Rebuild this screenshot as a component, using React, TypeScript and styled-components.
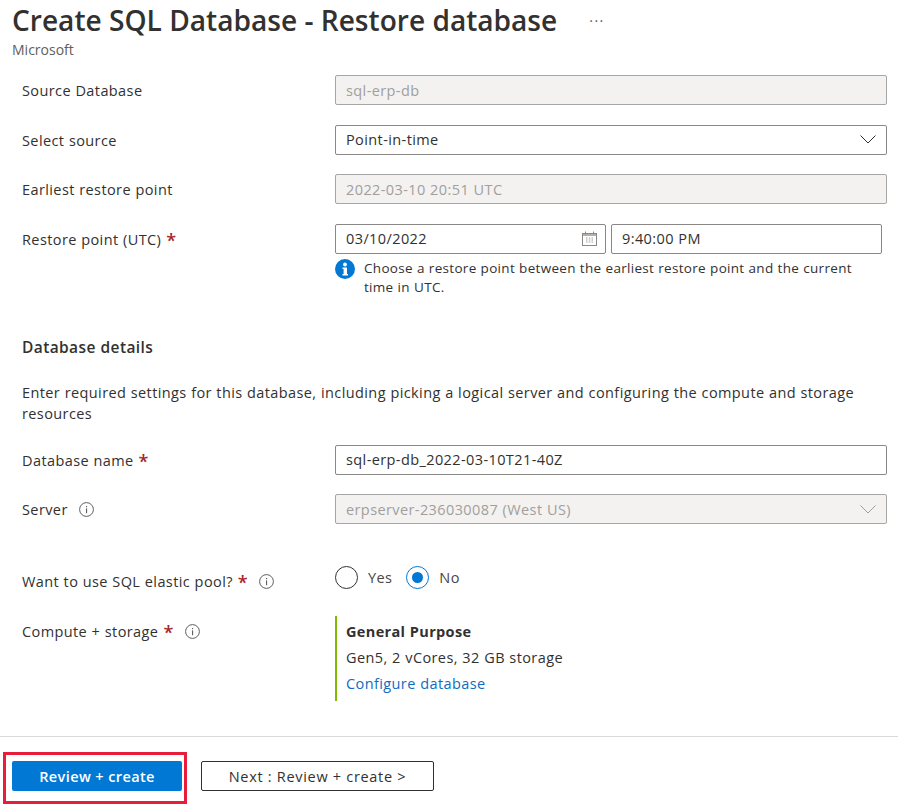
import React from 'react';
import styled, { createGlobalStyle } from 'styled-components';

const FONT = '"Open Sans", "Noto Sans", "Liberation Sans", sans-serif';
const TEXT = '#323130';
const BORDER = '#8a8886';
const DISABLED_BG = '#f3f2f1';
const DISABLED_BORDER = '#a8a6a4';
const DISABLED_TEXT = '#a19f9d';
const BLUE = '#0078d4';
const REQUIRED = '#a4262c';

const GlobalStyle = createGlobalStyle`
  html, body {
    margin: 0;
    padding: 0;
    background: #fff;
    height: 806px;
    overflow: hidden;
  }
  * {
    box-sizing: border-box;
  }
`;

function ChevronIcon({ color }: { color: string }) {
  return (
    <svg width="16" height="9" viewBox="0 0 16 9" fill="none">
      <path d="M0.5 0.5L8 8L15.5 0.5" stroke={color} strokeWidth="1" />
    </svg>
  );
}

function CalendarIcon() {
  return (
    <CalendarSvg width="15" height="15" viewBox="0 0 15 15" fill="none">
      <rect x="0.5" y="2.5" width="14" height="12" fill="#fff" stroke="#8a8886" />
      <rect x="1" y="3" width="13" height="2" fill="#b3b0ad" />
      <path d="M3.5 0.5v3M11.5 0.5v3" stroke="#8a8886" />
      <path
        d="M4 7h1.5M6.8 7h1.5M9.5 7h1.5M4 9h1.5M6.8 9h1.5M9.5 9h1.5M4 11h1.5M6.8 11h1.5M9.5 11h1.5"
        stroke="#a19f9d"
      />
    </CalendarSvg>
  );
}

function SmallInfoIcon() {
  return (
    <svg width="15" height="15" viewBox="0 0 15 15" fill="none">
      <circle cx="7.5" cy="7.5" r="6.9" stroke="#605e5c" strokeWidth="1" />
      <rect x="7" y="6.4" width="1.1" height="4.8" fill="#605e5c" />
      <rect x="7" y="4" width="1.1" height="1.2" fill="#605e5c" />
    </svg>
  );
}

function BlueInfoIcon() {
  return (
    <BlueInfoSvg width="20" height="20" viewBox="0 0 20 20">
      <circle cx="10" cy="10" r="10" fill={BLUE} />
      <path d="M7.5 8.5H12V15H13V16.5H7.5V15H8.6V10H7.5Z" fill="#fff" />
      <circle cx="10" cy="5.5" r="1.9" fill="#fff" />
    </BlueInfoSvg>
  );
}

type FieldProps = {
  label: string;
  required?: boolean;
  info?: boolean;
  children: React.ReactNode;
};

function Field({ label, required, info, children }: FieldProps) {
  return (
    <Row>
      <Label>
        {label}
        {required && <Required>*</Required>}
        {info && (
          <InfoSlot>
            <SmallInfoIcon />
          </InfoSlot>
        )}
      </Label>
      <Control>{children}</Control>
    </Row>
  );
}

export default function App() {
  return (
    <Page>
      <GlobalStyle />
      <Header>
        <TitleRow>
          <Title>Create SQL Database - Restore database</Title>
          <More>···</More>
        </TitleRow>
        <Subtitle>Microsoft</Subtitle>
      </Header>

      <Form>
        <Field label="Source Database">
          <Box disabled>sql-erp-db</Box>
        </Field>
        <Field label="Select source">
          <Box>
            Point-in-time
            <ChevronIcon color="#323130" />
          </Box>
        </Field>
        <Field label="Earliest restore point">
          <Box disabled>2022-03-10 20:51 UTC</Box>
        </Field>
        <Field label="Restore point (UTC)" required>
          <DateRow>
            <Box>
              03/10/2022
              <CalendarIcon />
            </Box>
            <Box>9:40:00 PM</Box>
          </DateRow>
          <InfoBlock>
            <BlueInfoIcon />
            <InfoText>
              Choose a restore point between the earliest restore point and the
              current time in UTC.
            </InfoText>
          </InfoBlock>
        </Field>

        <SectionTitle>Database details</SectionTitle>
        <SectionText>
          Enter required settings for this database, including picking a logical
          server and configuring the compute and storage resources
        </SectionText>

        <Field label="Database name" required>
          <Box>sql-erp-db_2022-03-10T21-40Z</Box>
        </Field>
        <Field label="Server" info>
          <Box disabled>
            erpserver-236030087 (West US)
            <ChevronIcon color="#a19f9d" />
          </Box>
        </Field>

        <PoolRow>
          <Field label="Want to use SQL elastic pool?" required info>
            <RadioGroup>
              <RadioOption>
                <Radio />
                Yes
              </RadioOption>
              <RadioOption>
                <Radio checked />
                No
              </RadioOption>
            </RadioGroup>
          </Field>
        </PoolRow>

        <Field label="Compute + storage" required info>
          <Summary>
            <SummaryTitle>General Purpose</SummaryTitle>
            <SummaryLine>Gen5, 2 vCores, 32 GB storage</SummaryLine>
            <SummaryLink href="#">Configure database</SummaryLink>
          </Summary>
        </Field>
      </Form>

      <Footer>
        <Highlight>
          <PrimaryButton>Review + create</PrimaryButton>
        </Highlight>
        <SecondaryButton>Next : Review + create &gt;</SecondaryButton>
      </Footer>
    </Page>
  );
}

const CalendarSvg = styled.svg`
  margin-right: -2px;
`;

const BlueInfoSvg = styled.svg`
  flex: none;
`;

const Page = styled.div`
  width: 898px;
  height: 806px;
  overflow: hidden;
  font-family: ${FONT};
  font-size: 14.5px;
  letter-spacing: 0.4px;
  word-spacing: 0.3px;
  color: ${TEXT};
  display: flex;
  flex-direction: column;
`;

const Header = styled.header`
  padding-left: 12px;
  height: 75px;
`;

const TitleRow = styled.div`
  display: flex;
  align-items: center;
  height: 40px;
`;

const Title = styled.h1`
  margin: 0;
  font-size: 28.1px;
  font-weight: 600;
  letter-spacing: 0;
  word-spacing: 0;
  line-height: 40px;
  white-space: nowrap;
`;

const More = styled.span`
  margin-left: 32px;
  font-size: 14px;
  color: #605e5c;
  letter-spacing: 1.5px;
`;

const Subtitle = styled.div`
  font-size: 14px;
  letter-spacing: 0;
  line-height: 20px;
  color: #605e5c;
`;

const Form = styled.div`
  flex: 1;
  padding: 0 11px 0 22px;
`;

const Row = styled.div`
  display: grid;
  grid-template-columns: 313px 552px;
  margin-bottom: 19.5px;
`;

const Label = styled.div`
  display: flex;
  align-items: flex-start;
  height: 30px;
  line-height: 32px;
  white-space: nowrap;
`;

const Required = styled.span`
  margin-left: 5px;
  color: ${REQUIRED};
  font-size: 18px;
  font-weight: 600;
`;

const InfoSlot = styled.span`
  display: inline-flex;
  align-items: center;
  height: 31px;
  margin-left: 11px;
`;

const Control = styled.div`
  min-width: 0;
`;

const Box = styled.div<{ disabled?: boolean }>`
  display: flex;
  align-items: center;
  justify-content: space-between;
  flex: 1;
  height: 30px;
  padding: 0 10px;
  border: 1px solid ${(p) => (p.disabled ? DISABLED_BORDER : BORDER)};
  border-radius: 2px;
  background: ${(p) => (p.disabled ? DISABLED_BG : '#fff')};
  color: ${(p) => (p.disabled ? DISABLED_TEXT : TEXT)};
  white-space: nowrap;
`;

const DateRow = styled.div`
  display: flex;
  gap: 5px;
  width: 547px;
`;

const InfoBlock = styled.div`
  display: flex;
  gap: 9px;
  margin-top: 5px;
  margin-bottom: 19px;
`;

const InfoText = styled.div`
  width: 500px;
  line-height: 19px;
  font-size: 13.5px;
  letter-spacing: 0.3px;
`;

const SectionTitle = styled.h2`
  margin: 0 0 23px;
  font-size: 15.5px;
  font-weight: 600;
  letter-spacing: 0.4px;
  line-height: 24px;
`;

const SectionText = styled.p`
  margin: 0 0 20.5px;
  line-height: 21px;
  width: 860px;
`;

const PoolRow = styled.div`
  margin-top: 41.5px;
  height: 50px;
`;

const RadioGroup = styled.div`
  display: flex;
  gap: 14px;
  height: 24px;
`;

const RadioOption = styled.label`
  display: flex;
  align-items: center;
  gap: 10px;
  color: #484644;
`;

const Radio = styled.span<{ checked?: boolean }>`
  position: relative;
  width: 23px;
  height: 23px;
  border-radius: 50%;
  border: 1px solid ${(p) => (p.checked ? BLUE : '#323130')};

  &::after {
    content: '';
    display: ${(p) => (p.checked ? 'block' : 'none')};
    position: absolute;
    inset: 5px;
    border-radius: 50%;
    background: ${BLUE};
  }
`;

const Summary = styled.div`
  height: 85px;
  border-left: 2px solid #7fba00;
  padding: 0 0 2px 9px;
  display: flex;
  flex-direction: column;
  justify-content: center;
  gap: 5px;
  line-height: 21px;
`;

const SummaryTitle = styled.div`
  font-weight: 700;
  letter-spacing: 0.35px;
`;

const SummaryLine = styled.div``;

const SummaryLink = styled.a`
  color: #0f6cbd;
  text-decoration: none;
`;

const Footer = styled.footer`
  height: 70px;
  border-top: 1px solid #d9d9d9;
  padding: 15px 0 0 3px;
  display: flex;
  align-items: flex-start;
  gap: 14px;
`;

const Highlight = styled.div`
  width: 184px;
  height: 52px;
  border: 3px solid #e81c3b;
  padding: 6px;
`;

const BaseButton = styled.button`
  height: 30px;
  border-radius: 2px;
  font-family: ${FONT};
  font-size: 14.5px;
  letter-spacing: 0.4px;
`;

const PrimaryButton = styled(BaseButton)`
  width: 170px;
  border: 0;
  background: ${BLUE};
  color: #fff;
  font-weight: 600;
`;

const SecondaryButton = styled(BaseButton)`
  width: 233px;
  margin-top: 9px;
  border: 1px solid #323130;
  background: #fff;
  color: ${TEXT};
  letter-spacing: 0.7px;
`;
